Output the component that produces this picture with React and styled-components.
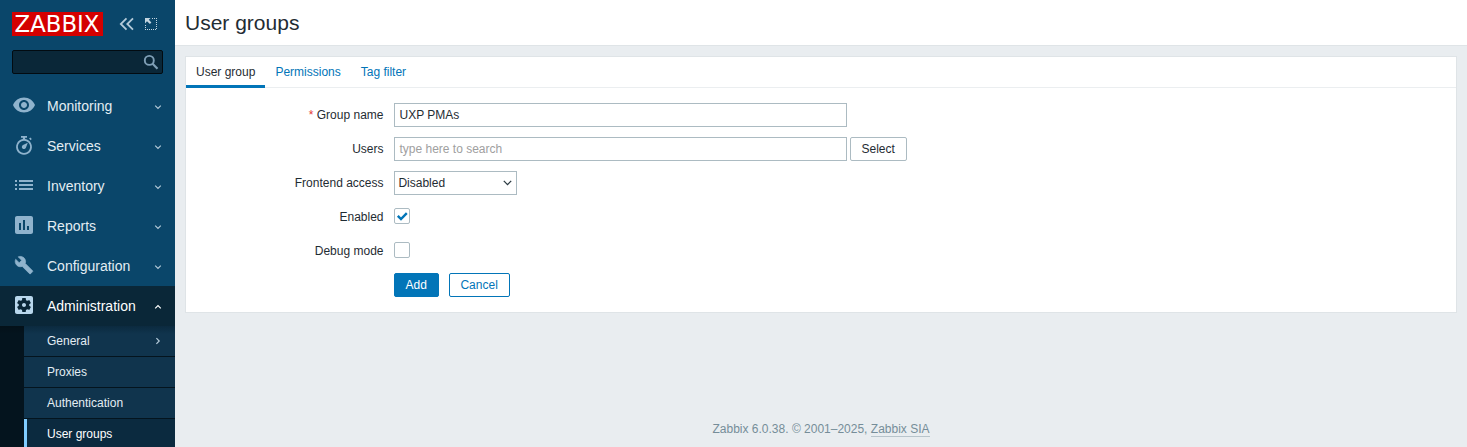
import React from "react";
import styled, { createGlobalStyle } from "styled-components";

const GlobalStyle = createGlobalStyle`
  *, *::before, *::after { box-sizing: border-box; }
  html, body { margin: 0; padding: 0; }
  body {
    overflow: hidden;
    background: #e9edf0;
    color: #1f2c33;
    font: 12px/14px "Liberation Sans", Arial, sans-serif;
  }
  input, button { font: inherit; color: inherit; }
  svg { display: block; flex: none; }
`;

const Layout = styled.div`
  display: flex;
  height: 100vh;
`;

const Sidebar = styled.aside`
  display: flex;
  flex-direction: column;
  flex: none;
  width: 175px;
  height: 100%;
  overflow: hidden;
  background: #0a466a;
`;

const SidebarHeader = styled.div`
  display: flex;
  align-items: center;
  flex: none;
  height: 24px;
  margin: 12px 12px 0;
`;

const Logo = styled.svg`
  background: #d40000;
`;

const HeaderIcon = styled.svg`
  margin-left: ${(p) => p.$gap}px;
`;

const Search = styled.div`
  display: flex;
  align-items: center;
  justify-content: flex-end;
  flex: none;
  height: 24px;
  margin: 14px 12px 12px;
  padding-right: 3px;
  background: #0a2738;
  border: 1px solid #020b11;
  border-radius: 2px;
`;

const MenuItem = styled.a`
  display: flex;
  align-items: flex-start;
  flex: none;
  height: 40px;
  padding: 7px 12px 0;
  color: ${(p) => (p.$open ? "#ffffff" : "#e3edf3")};
  background: ${(p) => (p.$open ? "#0a2738" : "transparent")};
`;

const MenuIcon = styled.svg`
  fill: ${(p) => (p.$open ? "#b9d7ec" : "#8fb3cd")};
`;

const MenuLabel = styled.span`
  flex: 1;
  margin-left: 11px;
  font-size: 14px;
  line-height: 26px;
`;

const MenuChevron = styled.svg`
  margin: 11px 1px 0 0;
`;

const SubMenu = styled.div`
  flex: none;
  padding-left: 24px;
  background: linear-gradient(rgba(0, 0, 0, 0.18), transparent 8px), #04141e;
`;

const SubItem = styled.a`
  display: flex;
  align-items: center;
  justify-content: space-between;
  height: 31px;
  padding: 0 13px 1px ${(p) => (p.$active ? 20 : 23)}px;
  color: ${(p) => (p.$active ? "#ffffff" : "#e3edf3")};
  background: ${(p) => (p.$active ? "#0b2a3f" : "#10344d")};
  border-left: ${(p) => (p.$active ? "3px solid #80ccff" : "0")};
  border-bottom: 1px solid #04141e;

  &:first-child {
    background: linear-gradient(#0b2a3f, #10344d 8px);
  }
`;

const Main = styled.main`
  display: flex;
  flex-direction: column;
  flex: 1;
`;

const Header = styled.header`
  height: 46px;
  padding: 10px 10px 0;
  background: #ffffff;
  border-bottom: 1px solid #dfe4e7;
`;

const Title = styled.h1`
  margin: 0;
  font-size: 21px;
  font-weight: normal;
  line-height: 25px;
`;

const Card = styled.section`
  height: 257px;
  margin: 10px 10px 0;
  background: #ffffff;
  border: 1px solid #dfe4e7;
`;

const Tabs = styled.nav`
  display: flex;
  height: 31px;
  border-bottom: 1px solid #ebeef0;
`;

const Tab = styled.a`
  height: 31px;
  padding: 8px 10px 0;
  color: ${(p) => (p.$active ? "#1f2c33" : "#0275b8")};
  border-bottom: 3px solid ${(p) => (p.$active ? "#0275b8" : "transparent")};
`;

const Form = styled.form`
  display: grid;
  grid-template-columns: 197.5px auto;
  column-gap: 10.2px;
  row-gap: 10px;
  padding-top: 15px;
`;

const Label = styled.label`
  line-height: 24px;
  text-align: right;
`;

const Required = styled.span`
  color: #e33734;
`;

const Field = styled.div`
  display: flex;
  align-items: center;
  grid-column: 2;
  gap: ${(p) => p.$gap || 0}px;
  height: 24px;
`;

const TextInput = styled.input`
  width: 453px;
  height: 24px;
  padding: 0 4.8px;
  background: #ffffff;
  border: 1px solid #acbbc2;
  border-radius: 0;
  outline: none;

  &::placeholder { color: #a0a0a0; opacity: 1; }
`;

const Select = styled.div`
  display: flex;
  align-items: center;
  justify-content: space-between;
  width: 123px;
  height: 24px;
  padding: 0 4px 0 3.7px;
  border: 1px solid #acbbc2;
`;

const Checkbox = styled.span`
  display: flex;
  width: 16px;
  height: 16px;
  margin-bottom: 2px;
  border: 1px solid #acbbc2;
  border-radius: 2px;
`;

const Button = styled.button`
  height: 24px;
  padding: 0 10.8px;
  line-height: 22px;
  color: ${(p) => p.$color};
  background: ${(p) => p.$fill || "#ffffff"};
  border: 1px solid ${(p) => p.$border};
  border-radius: 2px;
`;

const Footer = styled.footer`
  margin-top: auto;
  padding-bottom: 11px;
  color: #768d99;
  text-align: center;
`;

const FooterLink = styled.a`
  border-bottom: 1px solid #b8c4cb;
`;

const icons = {
  Monitoring: (
    <path d="M12 4.5C7 4.5 2.73 7.61 1 12c1.73 4.39 6 7.5 11 7.5s9.27-3.11 11-7.5c-1.73-4.39-6-7.5-11-7.5zM12 17c-2.76 0-5-2.24-5-5s2.24-5 5-5 5 2.24 5 5-2.24 5-5 5zm0-8c-1.66 0-3 1.34-3 3s1.34 3 3 3 3-1.34 3-3-1.34-3-3-3z" />
  ),
  Services: (
    <>
      <path fillRule="evenodd" d="M9 3h6v1.8h-1.9v1.3a7.9 7.9 0 1 1-2.2 0V4.8H9zM12 7.7a6.15 6.15 0 1 0 0 12.3a6.15 6.15 0 1 0 0-12.3z" />
      <path d="M17.1 5.6l1.2-1.1 1.5 1.5-1.2 1.2zM15.8 9.8l-1.9 4.9a2.1 2.1 0 1 1-2.9-2.6z" />
    </>
  ),
  Inventory: (
    <path d="M3 7h2v2H3zM7 7h14v2H7zM3 11h2v2H3zM7 11h14v2H7zM3 15h2v2H3zM7 15h14v2H7z" />
  ),
  Reports: (
    <path d="M19 3H5c-1.1 0-2 .9-2 2v14c0 1.1.9 2 2 2h14c1.1 0 2-.9 2-2V5c0-1.1-.9-2-2-2zM9 17H7v-7h2v7zm4 0h-2V7h2v10zm4 0h-2v-4h2v4z" />
  ),
  Configuration: (
    <path
      transform="translate(2.4 2.5) scale(.8)"
      stroke="#8fb3cd"
      strokeWidth=".8"
      d="M22.7 19l-9.1-9.1c.9-2.3.4-5-1.5-6.9-2-2-5-2.4-7.4-1.3L9 6 6 9 1.6 4.7C.4 7.1.9 10.1 2.9 12.1c1.9 1.9 4.6 2.4 6.9 1.5l9.1 9.1c.4.4 1 .4 1.4 0l2.3-2.3c.5-.4.5-1.1.1-1.4z"
    />
  ),
  Administration: (
    <path d="M12 10c-1.1 0-2 .9-2 2s.9 2 2 2 2-.9 2-2-.9-2-2-2zm7-7H5c-1.11 0-2 .9-2 2v14c0 1.1.89 2 2 2h14c1.11 0 2-.9 2-2V5c0-1.1-.89-2-2-2zm-1.75 9c0 .23-.02.46-.05.68l1.48 1.16c.13.11.17.3.08.45l-1.4 2.42c-.09.15-.27.21-.43.15l-1.74-.7c-.36.28-.76.51-1.18.69l-.26 1.85c-.03.17-.18.3-.35.3h-2.8c-.17 0-.32-.13-.35-.29l-.26-1.85c-.43-.18-.82-.41-1.18-.69l-1.74.7c-.16.06-.34 0-.43-.15l-1.4-2.42c-.09-.15-.05-.34.08-.45l1.48-1.16c-.03-.23-.05-.46-.05-.69s.02-.46.05-.68l-1.48-1.16c-.13-.11-.17-.3-.08-.45l1.4-2.42c.09-.15.27-.21.43-.15l1.74.7c.36-.28.76-.51 1.18-.69l.26-1.85c.03-.17.18-.3.35-.3h2.8c.17 0 .32.13.35.29l.26 1.85c.43.18.82.41 1.18.69l1.74-.7c.16-.06.34 0 .43.15l1.4 2.42c.09.15.05.34-.08.45l-1.48 1.16c.03.23.05.46.05.69z" />
  ),
};

const sections = ["Monitoring", "Services", "Inventory", "Reports", "Configuration", "Administration"];
const pages = ["General", "Proxies", "Authentication", "User groups"];

export default function App() {
  return (
    <>
      <GlobalStyle />
      <Layout>
        <Sidebar>
          <SidebarHeader>
            <Logo width="91" height="24">
              <text x="2.6" y="20.3" fill="#fff" fontFamily="DejaVu Sans, sans-serif" fontSize="22.5" textLength="84.8" lengthAdjust="spacingAndGlyphs">
                ZABBIX
              </text>
            </Logo>
            <HeaderIcon $gap={16} width="16" height="14" fill="none" stroke="#b4cad9" strokeWidth="1.8">
              <path d="M7.5 1.4L1.8 7l5.7 5.6M14 1.4L8.3 7l5.7 5.6" />
            </HeaderIcon>
            <HeaderIcon $gap={10} width="12" height="12" fill="#c3d5e0">
              <path d="M0 0h5.6L3.8 1.8 6.4 4.4 4.9 5.9 2 3.2 0 5.4z" />
              <path d="M7 .5h5M11.5 2v10M0 11.5h11M.5 7v4" fill="none" stroke="#c3d5e0" strokeDasharray="1 1" />
            </HeaderIcon>
          </SidebarHeader>
          <Search>
            <svg width="16" height="16" fill="none" stroke="#7f9fb6">
              <circle cx="6.3" cy="6.4" r="4.5" strokeWidth="1.9" />
              <path d="M9.6 9.8l4.9 4.9" strokeWidth="2.2" />
            </svg>
          </Search>
          {sections.map((name) => {
            const open = name === "Administration";
            return (
              <MenuItem key={name} $open={open}>
                <MenuIcon $open={open} width="24" height="24" viewBox="0 0 24 24">
                  {icons[name]}
                </MenuIcon>
                <MenuLabel>{name}</MenuLabel>
                <MenuChevron width="8" height="6" fill="none" stroke={open ? "#fff" : "#b4cad9"} strokeWidth="1.2">
                  <path d={open ? "M1.2 4.4L4 1.6l2.8 2.8" : "M1.2 1.6L4 4.4l2.8-2.8"} />
                </MenuChevron>
              </MenuItem>
            );
          })}
          <SubMenu>
            {pages.map((name) => (
              <SubItem key={name} $active={name === "User groups"}>
                {name}
                {name === "General" && (
                  <svg width="8" height="8" fill="none" stroke="#b4cad9" strokeWidth="1.2">
                    <path d="M2.4 1.2L5.2 4 2.4 6.8" />
                  </svg>
                )}
              </SubItem>
            ))}
          </SubMenu>
        </Sidebar>
        <Main>
          <Header>
            <Title>User groups</Title>
          </Header>
          <Card>
            <Tabs>
              <Tab $active>User group</Tab>
              <Tab>Permissions</Tab>
              <Tab>Tag filter</Tab>
            </Tabs>
            <Form>
              <Label>
                <Required>*</Required> Group name
              </Label>
              <Field>
                <TextInput defaultValue="UXP PMAs" />
              </Field>
              <Label>Users</Label>
              <Field $gap={3}>
                <TextInput placeholder="type here to search" />
                <Button type="button" $color="#1f2c33" $border="#acbbc2">Select</Button>
              </Field>
              <Label>Frontend access</Label>
              <Field>
                <Select>
                  Disabled
                  <svg width="9" height="6" fill="none" stroke="#2b3a42" strokeWidth="1.3">
                    <path d="M.8.9l3.7 3.7L8.2.9" />
                  </svg>
                </Select>
              </Field>
              <Label>Enabled</Label>
              <Field>
                <Checkbox>
                  <svg width="14" height="14" fill="none" stroke="#0275b8" strokeWidth="2.4">
                    <path d="M2.8 6.8l3.2 3.2 5.8-5.8" />
                  </svg>
                </Checkbox>
              </Field>
              <Label>Debug mode</Label>
              <Field>
                <Checkbox />
              </Field>
              <Field $gap={10}>
                <Button type="button" $color="#ffffff" $fill="#0275b8" $border="#0275b8">Add</Button>
                <Button type="button" $color="#0275b8" $border="#0275b8">Cancel</Button>
              </Field>
            </Form>
          </Card>
          <Footer>
            Zabbix 6.0.38. © 2001–2025, <FooterLink>Zabbix SIA</FooterLink>
          </Footer>
        </Main>
      </Layout>
    </>
  );
}
